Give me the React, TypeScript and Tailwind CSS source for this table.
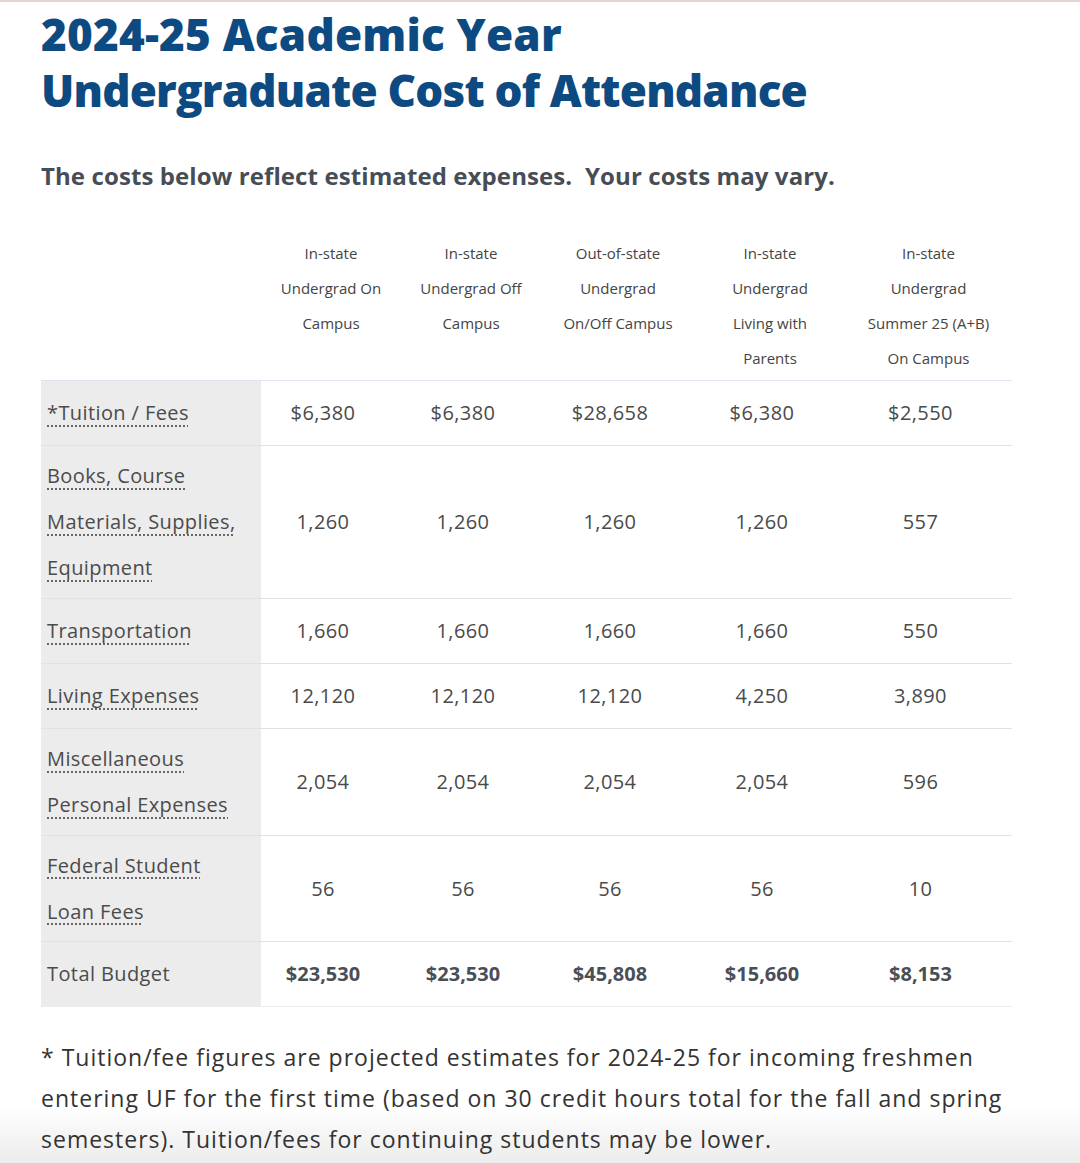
import React from "react";

const cols = [
  ["In-state", "Undergrad On", "Campus"],
  ["In-state", "Undergrad Off", "Campus"],
  ["Out-of-state", "Undergrad", "On/Off Campus"],
  ["In-state", "Undergrad", "Living with", "Parents"],
  ["In-state", "Undergrad", "Summer 25 (A+B)", "On Campus"],
];

const rows: { label: string[]; values: string[]; h: string }[] = [
  { label: ["*Tuition / Fees"], values: ["$6,380", "$6,380", "$28,658", "$6,380", "$2,550"], h: "h-[65px]" },
  { label: ["Books, Course", "Materials, Supplies,", "Equipment"], values: ["1,260", "1,260", "1,260", "1,260", "557"], h: "h-[153px]" },
  { label: ["Transportation"], values: ["1,660", "1,660", "1,660", "1,660", "550"], h: "h-[65px]" },
  { label: ["Living Expenses"], values: ["12,120", "12,120", "12,120", "4,250", "3,890"], h: "h-[65px]" },
  { label: ["Miscellaneous", "Personal Expenses"], values: ["2,054", "2,054", "2,054", "2,054", "596"], h: "h-[107px]" },
  { label: ["Federal Student", "Loan Fees"], values: ["56", "56", "56", "56", "10"], h: "h-[106px]" },
];

const totals = ["$23,530", "$23,530", "$45,808", "$15,660", "$8,153"];

export default function App() {
  return (
    <div
      className="relative min-h-[1163px] overflow-hidden bg-white border-t-2 border-[#e8d3d3]"
      style={{ fontFamily: '"Open Sans", "Noto Sans", sans-serif' }}
    >
      <div className="pointer-events-none absolute bottom-0 left-0 right-0 h-[58px] bg-linear-to-b from-white/0 to-[#ececec]" />
      <div className="relative pl-[41px] pr-[20px]">
        <h1 className="mt-[4px] text-[44px] leading-[56px] font-extrabold text-[#0d4a81] tracking-[-0.8px]">
          <span className="tracking-[0.2px]">2024-25 Academic Year</span>
          <br />
          Undergraduate Cost of Attendance
        </h1>
        <p className="mt-[42px] text-[24px] leading-[32px] font-bold text-[#474d55] tracking-[0.1px]">
          The costs below reflect estimated expenses.&nbsp; Your costs may vary.
        </p>

        <table className="mt-[44px] w-[971px] table-fixed border-collapse">
          <colgroup>
            <col className="w-[220px]" />
            <col className="w-[140px]" />
            <col className="w-[140px]" />
            <col className="w-[154px]" />
            <col className="w-[150px]" />
            <col className="w-[167px]" />
          </colgroup>
          <thead>
            <tr className="border-b border-[#dfe4ee]">
              <th className="p-0" />
              {cols.map((c, i) => (
                <th
                  key={i}
                  className="p-0 pb-[4px] align-top text-center text-[15px] leading-[35px] font-normal text-[#444]"
                >
                  {c.map((l, j) => (
                    <div key={j}>{l}</div>
                  ))}
                </th>
              ))}
            </tr>
          </thead>
          <tbody>
            {rows.map((r, i) => (
              <tr key={i} className={`border-b border-[#e2e2e2] ${r.h}`}>
                <td className="bg-[#ececec] py-[6px] pl-[6px] pr-[4px] align-middle text-[20px] leading-[46px] text-[#4b4b4b] tracking-[0.4px]">
                  {r.label.map((l, j) => (
                    <div key={j}>
                      <span className="underline decoration-dotted decoration-[#666] decoration-[1.5px] underline-offset-[5px]">
                        {l}
                      </span>
                    </div>
                  ))}
                </td>
                {r.values.map((v, j) => (
                  <td
                    key={j}
                    className="py-[6px] pl-0 pr-[16px] align-middle text-center text-[20px] leading-[46px] text-[#4a4a4a] tracking-[0.4px]"
                  >
                    {v}
                  </td>
                ))}
              </tr>
            ))}
            <tr className="border-b border-[#ececec] h-[65px]">
              <td className="bg-[#ececec] py-[6px] pl-[6px] align-middle text-[20px] leading-[46px] text-[#4b4b4b] tracking-[0.4px]">
                Total Budget
              </td>
              {totals.map((v, j) => (
                <td
                  key={j}
                  className="py-[6px] pl-0 pr-[16px] align-middle text-center text-[20px] leading-[46px] font-bold text-[#4a4f57]"
                >
                  {v}
                </td>
              ))}
            </tr>
          </tbody>
        </table>

        <p className="mt-[30px] whitespace-nowrap text-[23px] leading-[41px] text-[#333] tracking-[1px]">
          * Tuition/fee figures are projected estimates for 2024-25 for incoming freshmen
          <br />
          entering UF for the first time (based on 30 credit hours total for the fall and spring
          <br />
          semesters). Tuition/fees for continuing students may be lower.
        </p>
      </div>
    </div>
  );
}
